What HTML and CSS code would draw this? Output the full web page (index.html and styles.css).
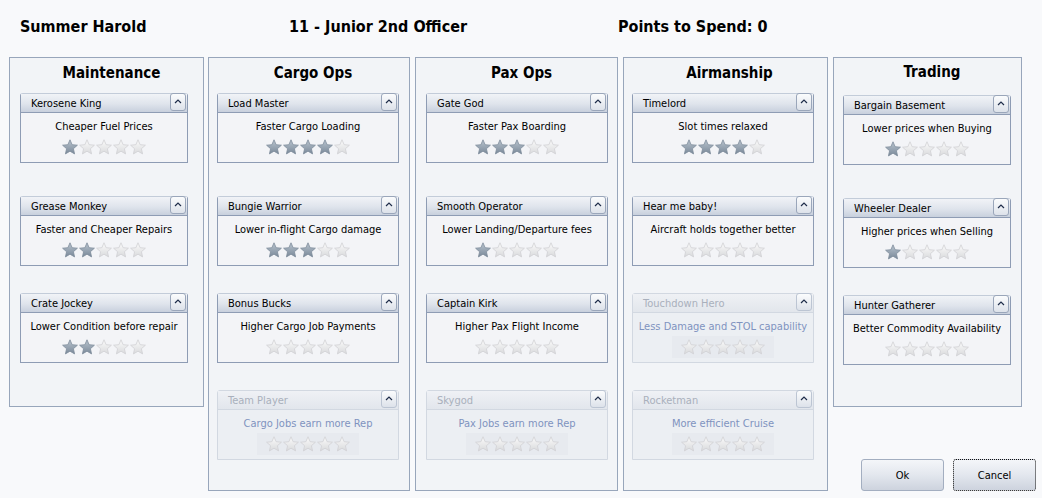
FILE: index.html
```html
<!DOCTYPE html>
<html>
<head>
<meta charset="utf-8">
<link rel="stylesheet" href="styles.css">
</head>
<body>
<svg class="defs" width="0" height="0">
  <defs>
    <linearGradient id="gOn" x1="0" y1="0" x2="0" y2="1">
      <stop offset="0" stop-color="#b9c4cf"/>
      <stop offset="1" stop-color="#7a8999"/>
    </linearGradient>
    <linearGradient id="gOff" x1="0" y1="0" x2="0" y2="1">
      <stop offset="0" stop-color="#fbfbfb"/>
      <stop offset="1" stop-color="#d9dadc"/>
    </linearGradient>
    <symbol id="starOn" viewBox="0 0 16 16">
      <polygon points="8,0.8 10.12,5.69 15.42,6.19 11.42,9.71 12.59,14.91 8,12.2 3.41,14.91 4.58,9.71 0.58,6.19 5.88,5.69" fill="url(#gOn)" stroke="#7f8d9c" stroke-width="0.8" stroke-linejoin="round"/>
    </symbol>
    <symbol id="starOff" viewBox="0 0 16 16">
      <polygon points="8,0.8 10.12,5.69 15.42,6.19 11.42,9.71 12.59,14.91 8,12.2 3.41,14.91 4.58,9.71 0.58,6.19 5.88,5.69" fill="url(#gOff)" stroke="#d0d1d4" stroke-width="0.8" stroke-linejoin="round"/>
    </symbol>
    <symbol id="caret" viewBox="0 0 14 16">
      <polyline points="4,9 7,6 10,9" fill="none" stroke="#1f2d4a" stroke-width="1.2"/>
    </symbol>
  </defs>
</svg>

<div class="top">
  <div class="t-name">Summer Harold</div>
  <div class="t-rank">11 - Junior 2nd Officer</div>
  <div class="t-points">Points to Spend: 0</div>
</div>

<div class="columns">
  <section class="panel p-maint">
    <h2>Maintenance</h2>
    <div class="cards">
      <div class="card"><div class="hd"><span>Kerosene King</span><i class="btn-c"><svg><use href="#caret"/></svg></i></div>
        <div class="bd"><p>Cheaper Fuel Prices</p><div class="stars" data-n="1"></div></div></div>
      <div class="card"><div class="hd"><span>Grease Monkey</span><i class="btn-c"><svg><use href="#caret"/></svg></i></div>
        <div class="bd"><p>Faster and Cheaper Repairs</p><div class="stars" data-n="2"></div></div></div>
      <div class="card"><div class="hd"><span>Crate Jockey</span><i class="btn-c"><svg><use href="#caret"/></svg></i></div>
        <div class="bd"><p>Lower Condition before repair</p><div class="stars" data-n="2"></div></div></div>
    </div>
  </section>

  <section class="panel p-cargo">
    <h2>Cargo Ops</h2>
    <div class="cards">
      <div class="card"><div class="hd"><span>Load Master</span><i class="btn-c"><svg><use href="#caret"/></svg></i></div>
        <div class="bd"><p>Faster Cargo Loading</p><div class="stars" data-n="4"></div></div></div>
      <div class="card"><div class="hd"><span>Bungie Warrior</span><i class="btn-c"><svg><use href="#caret"/></svg></i></div>
        <div class="bd"><p>Lower in-flight Cargo damage</p><div class="stars" data-n="3"></div></div></div>
      <div class="card"><div class="hd"><span>Bonus Bucks</span><i class="btn-c"><svg><use href="#caret"/></svg></i></div>
        <div class="bd"><p>Higher Cargo Job Payments</p><div class="stars" data-n="0"></div></div></div>
      <div class="card off"><div class="hd"><span>Team Player</span><i class="btn-c"><svg><use href="#caret"/></svg></i></div>
        <div class="bd"><p>Cargo Jobs earn more Rep</p><div class="stars" data-n="0"></div></div></div>
    </div>
  </section>

  <section class="panel p-pax">
    <h2>Pax Ops</h2>
    <div class="cards">
      <div class="card"><div class="hd"><span>Gate God</span><i class="btn-c"><svg><use href="#caret"/></svg></i></div>
        <div class="bd"><p>Faster Pax Boarding</p><div class="stars" data-n="3"></div></div></div>
      <div class="card"><div class="hd"><span>Smooth Operator</span><i class="btn-c"><svg><use href="#caret"/></svg></i></div>
        <div class="bd"><p>Lower Landing/Departure fees</p><div class="stars" data-n="1"></div></div></div>
      <div class="card"><div class="hd"><span>Captain Kirk</span><i class="btn-c"><svg><use href="#caret"/></svg></i></div>
        <div class="bd"><p>Higher Pax Flight Income</p><div class="stars" data-n="0"></div></div></div>
      <div class="card off"><div class="hd"><span>Skygod</span><i class="btn-c"><svg><use href="#caret"/></svg></i></div>
        <div class="bd"><p>Pax Jobs earn more Rep</p><div class="stars" data-n="0"></div></div></div>
    </div>
  </section>

  <section class="panel p-air">
    <h2>Airmanship</h2>
    <div class="cards">
      <div class="card"><div class="hd"><span>Timelord</span><i class="btn-c"><svg><use href="#caret"/></svg></i></div>
        <div class="bd"><p>Slot times relaxed</p><div class="stars" data-n="4"></div></div></div>
      <div class="card"><div class="hd"><span>Hear me baby!</span><i class="btn-c"><svg><use href="#caret"/></svg></i></div>
        <div class="bd"><p>Aircraft holds together better</p><div class="stars" data-n="0"></div></div></div>
      <div class="card off"><div class="hd"><span>Touchdown Hero</span><i class="btn-c"><svg><use href="#caret"/></svg></i></div>
        <div class="bd"><p>Less Damage and STOL capability</p><div class="stars" data-n="0"></div></div></div>
      <div class="card off"><div class="hd"><span>Rocketman</span><i class="btn-c"><svg><use href="#caret"/></svg></i></div>
        <div class="bd"><p>More efficient Cruise</p><div class="stars" data-n="0"></div></div></div>
    </div>
  </section>

  <div class="last">
    <section class="panel p-trade">
      <h2>Trading</h2>
      <div class="cards">
        <div class="card"><div class="hd"><span>Bargain Basement</span><i class="btn-c"><svg><use href="#caret"/></svg></i></div>
          <div class="bd"><p>Lower prices when Buying</p><div class="stars" data-n="1"></div></div></div>
        <div class="card"><div class="hd"><span>Wheeler Dealer</span><i class="btn-c"><svg><use href="#caret"/></svg></i></div>
          <div class="bd"><p>Higher prices when Selling</p><div class="stars" data-n="1"></div></div></div>
        <div class="card"><div class="hd"><span>Hunter Gatherer</span><i class="btn-c"><svg><use href="#caret"/></svg></i></div>
          <div class="bd"><p>Better Commodity Availability</p><div class="stars" data-n="0"></div></div></div>
      </div>
    </section>
    <div class="buttons">
      <button class="btn">Ok</button>
      <button class="btn focus">Cancel</button>
    </div>
  </div>
</div>

<script>
document.querySelectorAll('.stars').forEach(function (el) {
  var n = parseInt(el.getAttribute('data-n'), 10);
  var html = '';
  for (var i = 0; i < 5; i++) {
    html += '<svg class="star" viewBox="0 0 16 16"><use href="#' + (i < n ? 'starOn' : 'starOff') + '"/></svg>';
  }
  el.innerHTML = html;
});
</script>
</body>
</html>
```
FILE: styles.css
```css
* { box-sizing: border-box; }
html, body { margin: 0; padding: 0; }
body {
  width: 1042px;
  height: 498px;
  overflow: hidden;
  background: #f8f9fb;
  font-family: "DejaVu Sans Condensed", "DejaVu Sans", sans-serif;
  color: #000;
}
.defs { position: absolute; width: 0; height: 0; }

.top {
  display: flex;
  align-items: center;
  height: 57px;
  padding: 0 0 4px 20px;
  font-weight: bold;
  font-size: 16px;
}
.t-name { width: 269px; }
.t-rank { width: 329px; }

.columns {
  display: flex;
  align-items: flex-start;
  padding-left: 9px;
}
.panel {
  background: #f2f4f7;
  border: 1px solid #98a6bb;
  height: 434px;
  margin-right: 5px;
}
.p-maint { width: 195px; height: 350px; margin-right: 4px; padding-left: 10px; }
.p-cargo { width: 202px; padding-left: 8px; }
.p-pax   { width: 203px; padding-left: 10px; }
.p-air   { width: 205px; padding-left: 8px; }
.p-trade { width: 189px; height: 350px; margin-right: 0; padding-left: 9px; }

.panel h2 {
  margin: 6px 0 11px;
  font-size: 15px;
  line-height: 18px;
  font-weight: bold;
  text-align: center;
}
.p-trade h2 { margin-top: 5px; margin-bottom: 14px; }

.cards {
  display: flex;
  flex-direction: column;
  gap: 27px;
}
.card {
  width: 182px;
  height: 70px;
  border: 1px solid #8e9cb4;
  border-top-color: #c3ccd9;
  border-radius: 3px 3px 0 0;
  background: #f3f4f7;
  font-size: 11px;
}
.card:first-child { margin-bottom: 6px; }
.p-maint .card, .p-trade .card { width: 168px; }

.hd {
  display: flex;
  align-items: center;
  justify-content: space-between;
  height: 19px;
  padding: 1px 1px 0 10px;
  background: linear-gradient(#f1f3f7, #dfe4ec 55%, #c8d0dd);
  border-bottom: 1px solid #8e9cb4;
  color: #000;
}
.btn-c {
  display: block;
  width: 16px;
  height: 18px;
  margin-top: -3px;
  border: 1px solid #9aa6ba;
  border-radius: 3px;
  background: linear-gradient(#fbfcfd, #dde2ea);
}
.btn-c svg { display: block; width: 14px; height: 16px; }

.bd {
  display: flex;
  flex-direction: column;
  align-items: center;
  padding-top: 6px;
}
.bd p {
  margin: 0;
  line-height: 16px;
  text-align: center;
  color: #000;
}
.stars {
  display: flex;
  gap: 1px;
  margin-top: 3px;
  padding: 1px 0;
}
.star { width: 16px; height: 16px; display: block; }

.card.off {
  border-color: #d2d8e1;
  background: #eceff3;
}
.card.off .hd {
  background: linear-gradient(#eff1f5, #e2e6ec);
  border-bottom-color: #d2d8e1;
  color: #a9b0bc;
}
.card.off .btn-c { border-color: #bcc5d3; }
.card.off .btn-c polyline { stroke: #8893a6; }
.card.off .bd p { color: #7f93bf; }
.card.off .stars {
  background: #e7eaef;
  padding: 3px 9px;
  margin-top: 1px;
}

.last {
  display: flex;
  flex-direction: column;
  width: 203px;
}
.buttons {
  display: flex;
  justify-content: flex-end;
  gap: 9px;
  margin-top: 52px;
}
.btn {
  width: 83px;
  height: 32px;
  border: 1px solid #a3aec0;
  border-radius: 3px;
  background: linear-gradient(#f4f6f9, #e3e7ee 50%, #cdd3de);
  font-family: "DejaVu Sans Condensed", "DejaVu Sans", sans-serif;
  font-size: 11px;
  color: #000;
  padding: 0;
}
.btn.focus {
  border: 1px dotted #111;
}
```
